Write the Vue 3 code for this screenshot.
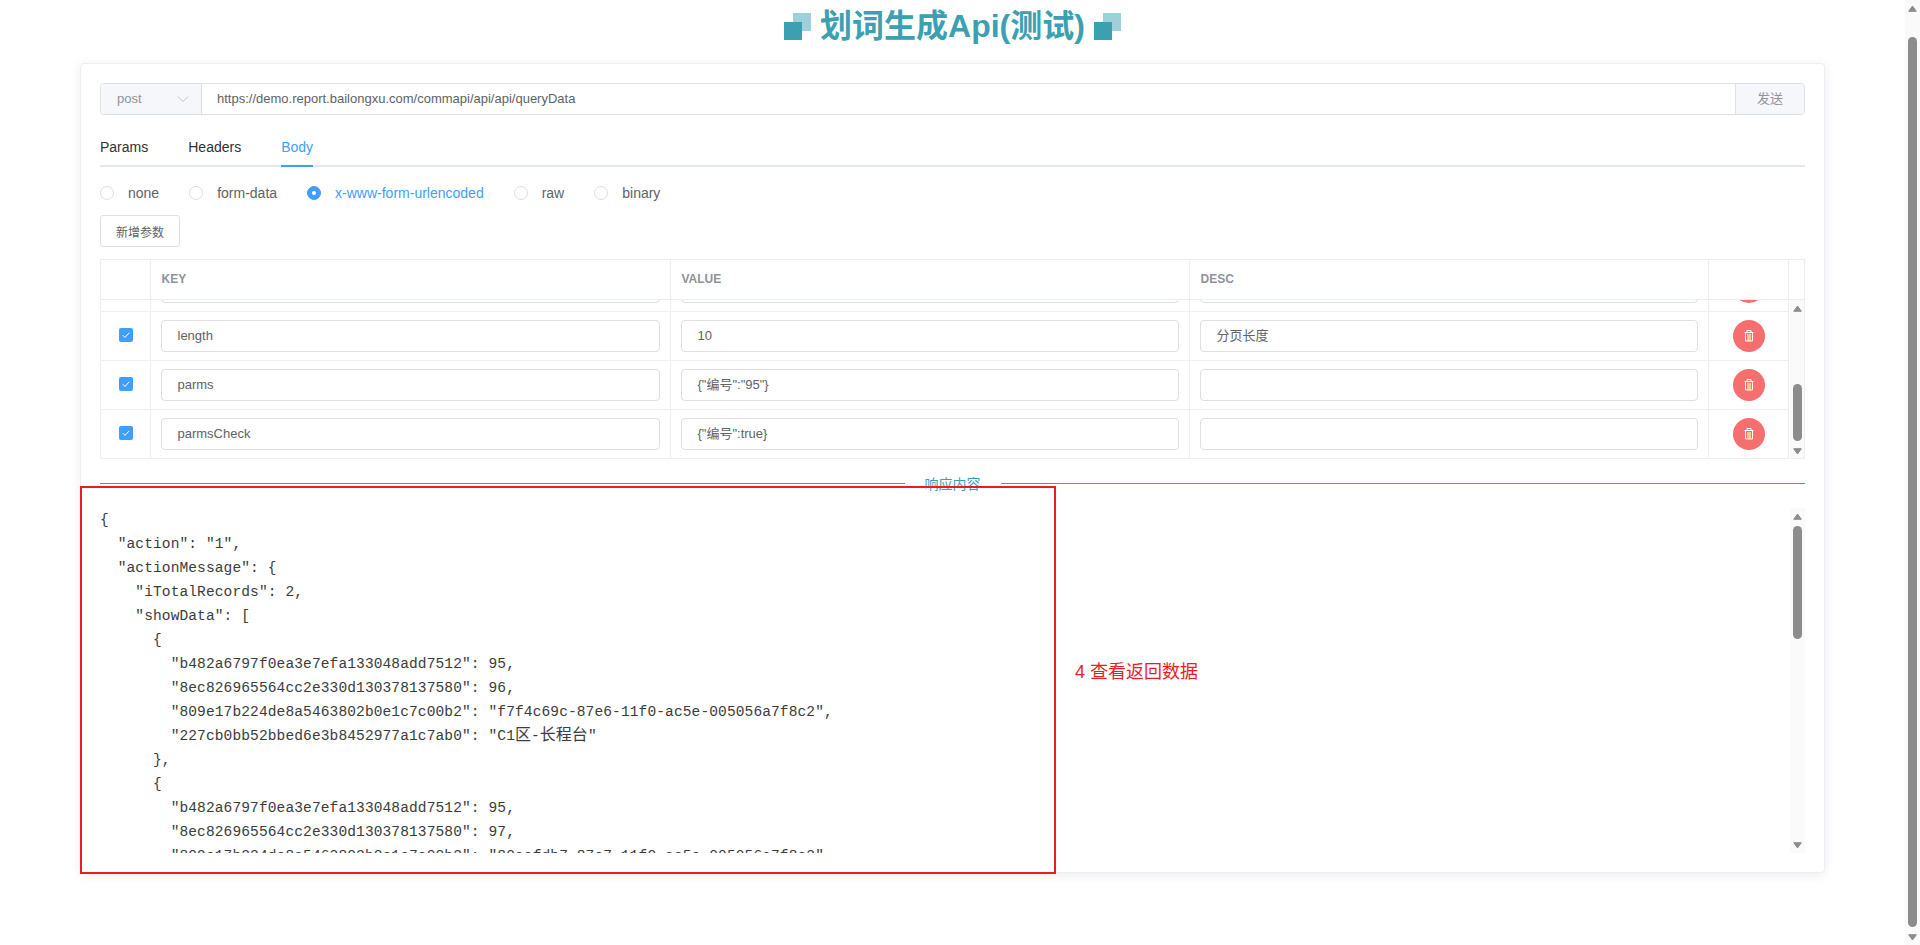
<script setup>
const radios = [
  { label: 'none' },
  { label: 'form-data' },
  { label: 'x-www-form-urlencoded', active: true },
  { label: 'raw' },
  { label: 'binary' },
]
const tabs = [{ label: 'Params' }, { label: 'Headers' }, { label: 'Body', active: true }]
const rows = [
  { key: '', value: '', desc: '' },
  { key: 'length', value: '10', desc: '分页长度' },
  { key: 'parms', value: '{"编号":"95"}', desc: '' },
  { key: 'parmsCheck', value: '{"编号":true}', desc: '' },
]
const json = `{
  "action": "1",
  "actionMessage": {
    "iTotalRecords": 2,
    "showData": [
      {
        "b482a6797f0ea3e7efa133048add7512": 95,
        "8ec826965564cc2e330d130378137580": 96,
        "809e17b224de8a5463802b0e1c7c00b2": "f7f4c69c-87e6-11f0-ac5e-005056a7f8c2",
        "227cb0bb52bbed6e3b8452977a1c7ab0": "C1区-长程台"
      },
      {
        "b482a6797f0ea3e7efa133048add7512": 95,
        "8ec826965564cc2e330d130378137580": 97,
        "809e17b224de8a5463802b0e1c7c00b2": "80acfdb7-87e7-11f0-ac5e-005056a7f8c2"`
  .split('\n')
  .map((l) => l.split(/([\u4e00-\u9fff]+)/))
</script>

<template>
  <div class="page">
    <main class="content">
      <h1 class="title">
        <span class="squares"><i class="sq light"></i><i class="sq dark"></i></span>
        <span class="title-text">划词生成Api(测试)</span>
        <span class="squares"><i class="sq light"></i><i class="sq dark"></i></span>
      </h1>

      <section class="card">
        <div class="url-bar">
          <div class="method">
            <span>post</span>
            <svg class="chevron" width="12" height="8" viewBox="0 0 12 8"><path d="M1 1.5l5 5 5-5" fill="none" stroke="#c0c4cc" stroke-width="1" /></svg>
          </div>
          <div class="url">https://demo.report.bailongxu.com/commapi/api/api/queryData</div>
          <div class="send">发送</div>
        </div>

        <div class="tabs">
          <div v-for="t in tabs" :key="t.label" class="tab" :class="{ active: t.active }">{{ t.label }}</div>
        </div>

        <div class="radios">
          <label v-for="r in radios" :key="r.label" class="radio" :class="{ active: r.active }">
            <i class="radio-dot"></i><span>{{ r.label }}</span>
          </label>
        </div>

        <button class="add">新增参数</button>

        <div class="table">
          <div class="grid head">
            <div class="cell"></div>
            <div class="cell th">KEY</div>
            <div class="cell th">VALUE</div>
            <div class="cell th">DESC</div>
            <div class="cell"></div>
            <div class="cell end"></div>
          </div>
          <div class="tbody">
            <div class="viewport">
              <div class="rows">
                <div v-for="(row, i) in rows" :key="i" class="grid row">
                  <div class="cell center">
                    <span class="check">
                      <svg width="14" height="14" viewBox="0 0 14 14"><path d="M3.8 7.2l2.2 2.2 4.2-4.6" fill="none" stroke="#fff" stroke-width="1" /></svg>
                    </span>
                  </div>
                  <div class="cell pad"><div class="input">{{ row.key }}</div></div>
                  <div class="cell pad"><div class="input">{{ row.value }}</div></div>
                  <div class="cell pad"><div class="input">{{ row.desc }}</div></div>
                  <div class="cell center">
                    <span class="del">
                      <svg width="14" height="14" viewBox="0 0 14 14">
                        <rect x="5" y="5" width="4" height="7" fill="#fbc98a" />
                        <path d="M2.5 3.5h9M5 3.5V1.5h4v2M3.5 3.5v8.5h7V3.5" fill="none" stroke="#fff" stroke-width="1" />
                      </svg>
                    </span>
                  </div>
                </div>
              </div>
            </div>
            <div class="sb sb-table">
              <svg class="arrow" width="9" height="7" viewBox="0 0 9 7"><path d="M4.5 1L8.3 6.3H.7z" fill="#8c8c8c" stroke="#8c8c8c" stroke-linejoin="round" /></svg>
              <div class="thumb"></div>
              <svg class="arrow down" width="9" height="7" viewBox="0 0 9 7"><path d="M4.5 6L8.3.7H.7z" fill="#8c8c8c" stroke="#8c8c8c" stroke-linejoin="round" /></svg>
            </div>
          </div>
        </div>

        <div class="divider">
          <span class="line"></span><span class="divider-text">响应内容</span><span class="line"></span>
        </div>

        <div class="response">
          <div class="code">
            <div v-for="(parts, i) in json" :key="i" class="code-line"><template v-for="(p, j) in parts" :key="j"><span v-if="j % 2" class="cjk">{{ p }}</span><template v-else>{{ p }}</template></template></div>
          </div>
          <div class="sb sb-pane">
            <svg class="arrow" width="9" height="7" viewBox="0 0 9 7"><path d="M4.5 1L8.3 6.3H.7z" fill="#8c8c8c" stroke="#8c8c8c" stroke-linejoin="round" /></svg>
            <div class="thumb"></div>
            <svg class="arrow down" width="9" height="7" viewBox="0 0 9 7"><path d="M4.5 6L8.3.7H.7z" fill="#8c8c8c" stroke="#8c8c8c" stroke-linejoin="round" /></svg>
          </div>
        </div>
      </section>
    </main>

    <div class="sb sb-page">
      <svg class="arrow" width="9" height="7" viewBox="0 0 9 7"><path d="M4.5 1L8.3 6.3H.7z" fill="#8c8c8c" stroke="#8c8c8c" stroke-linejoin="round" /></svg>
      <div class="thumb"></div>
      <svg class="arrow down" width="9" height="7" viewBox="0 0 9 7"><path d="M4.5 6L8.3.7H.7z" fill="#8c8c8c" stroke="#8c8c8c" stroke-linejoin="round" /></svg>
    </div>

    <div class="mark-box"></div>
    <div class="mark-text">4 查看返回数据</div>
  </div>
</template>

<style>
html, body { margin: 0; overflow: hidden; background: #fff; }
</style>

<style scoped>
* { box-sizing: border-box; }
.page {
  position: relative;
  display: flex;
  height: 945px;
  overflow: hidden;
  font-family: "Liberation Sans", "Noto Sans CJK SC", sans-serif;
  color: #606266;
  background: #fff;
}
.content { flex: 1; min-width: 0; padding: 0 80px; }

.title {
  height: 52px;
  margin: 0 0 11px;
  display: flex;
  justify-content: center;
  align-items: center;
  gap: 9px;
  font-size: 32px;
  font-weight: 700;
  line-height: 52px;
  color: #3ba0b0;
}
.squares { position: relative; width: 27px; height: 27px; display: block; }
.sq { position: absolute; width: 18px; height: 18px; display: block; }
.sq.light { left: 9px; top: 0; background: #9dd0d8; }
.sq.dark { left: 0; top: 9px; background: #3ba0b0; }

.card {
  background: #fff;
  border: 1px solid #ebeef5;
  border-radius: 4px;
  box-shadow: 0 2px 12px rgba(0, 0, 0, 0.08);
  padding: 19px;
  height: 810px;
}

.url-bar {
  display: flex;
  height: 32px;
  border: 1px solid #dcdfe6;
  border-radius: 4px;
  font-size: 13px;
  line-height: 30px;
  overflow: hidden;
}
.method {
  width: 101px;
  flex: none;
  padding: 0 12px 0 16px;
  background: #f5f7fa;
  border-right: 1px solid #dcdfe6;
  color: #909399;
  display: flex;
  justify-content: space-between;
  align-items: center;
}
.chevron { display: block; }
.url { flex: 1; padding-left: 15px; }
.send {
  width: 69px;
  flex: none;
  text-align: center;
  background: #f5f7fa;
  border-left: 1px solid #dcdfe6;
  color: #909399;
}

.tabs {
  display: flex;
  gap: 40px;
  height: 40px;
  margin-top: 12px;
  border-bottom: 2px solid #e4e7ed;
}
.tab {
  height: 40px;
  line-height: 40px;
  font-size: 14px;
  color: #303133;
  border-bottom: 2px solid transparent;
}
.tab.active { color: #409eff; border-bottom-color: #409eff; }

.radios {
  display: flex;
  gap: 30px;
  height: 22px;
  margin-top: 15px;
  align-items: center;
  font-size: 14px;
}
.radio { display: flex; align-items: center; gap: 14px; }
.radio-dot {
  width: 14px;
  height: 14px;
  border: 1px solid #dcdfe6;
  border-radius: 50%;
  display: block;
  background: #fff;
}
.radio.active { color: #409eff; }
.radio.active .radio-dot {
  border-color: #409eff;
  background: #409eff;
  display: flex;
  align-items: center;
  justify-content: center;
}
.radio.active .radio-dot::after {
  content: "";
  width: 4px;
  height: 4px;
  border-radius: 50%;
  background: #fff;
}

.add {
  display: block;
  width: 80px;
  height: 32px;
  margin-top: 11px;
  padding: 0;
  border: 1px solid #dcdfe6;
  border-radius: 3px;
  background: #fff;
  color: #606266;
  font: 12px "Liberation Sans", "Noto Sans CJK SC", sans-serif;
}

.table {
  margin-top: 12px;
  border-top: 1px solid #ebeef5;
  border-left: 1px solid #ebeef5;
}
.grid { display: grid; grid-template-columns: 50px 520px 519px 519px 80px; }
.head { grid-template-columns: 50px 520px 519px 519px 80px 16px; height: 40px; border-bottom: 1px solid #ebeef5; }
.cell { border-right: 1px solid #ebeef5; min-width: 0; }
.th {
  padding-left: 10.5px;
  font-size: 12px;
  font-weight: 700;
  line-height: 39px;
  color: #909399;
}
.tbody { display: flex; height: 159px; }
.viewport { width: 1688px; flex: none; height: 159px; overflow: hidden; }
.rows { margin-top: -37px; }
.row { height: 49px; border-bottom: 1px solid #ebeef5; }
.center { display: flex; align-items: center; justify-content: center; }
.pad { padding: 8px 10px; }
.input {
  height: 32px;
  padding: 0 15px 0 15.5px;
  border: 1px solid #dcdfe6;
  border-radius: 4px;
  font-size: 13px;
  line-height: 30px;
  white-space: nowrap;
  background: #fff;
}
.check {
  width: 14px;
  height: 14px;
  margin: 0 0 2px 1px;
  border-radius: 2px;
  background: #409eff;
  display: block;
}
.check svg, .del svg { display: block; }
.del {
  width: 32px;
  height: 32px;
  border-radius: 50%;
  background: #f66e6e;
  display: flex;
  align-items: center;
  justify-content: center;
}

.sb {
  width: 15px;
  flex: none;
  display: flex;
  flex-direction: column;
  align-items: flex-start;
  padding-left: 3px;
  padding-top: 5px;
  background: #fafafa;
}
.arrow { display: block; flex: none; }
.thumb { width: 9px; background: #8c8c8c; border-radius: 5px; flex: none; }
.sb-table { margin-left: 1px; border-right: 1px solid #ebeef5; border-bottom: 1px solid #ebeef5; height: 159px; }
.sb-table .thumb { margin-top: 72px; height: 57px; }
.sb-table .down { margin-top: 7px; }
.sb-pane { height: 345px; }
.sb-pane .thumb { margin-top: 6px; height: 113px; }
.sb-pane .down { margin-top: 203px; }
.sb-page { height: 945px; }
.sb-page .thumb { margin-top: 25px; height: 890px; }
.sb-page .down { margin-top: 7px; }

.divider {
  display: flex;
  align-items: center;
  height: 1px;
  margin: 24px 0;
}
.line { flex: 1; height: 1px; background: #3ba0b0; }
.divider-text {
  flex: none;
  padding: 0 20px;
  font-size: 14px;
  line-height: 20px;
  color: #3ba0b0;
}

.response { display: flex; height: 345px; }
.code {
  flex: 1;
  min-width: 0;
  height: 345px;
  overflow: hidden;
  font-family: "Liberation Mono", "Noto Sans CJK SC", monospace;
  font-size: 14.55px;
  letter-spacing: 0.1px;
  line-height: 24px;
  color: #3c3c3c;
  white-space: pre;
}
.code-line { height: 24px; }
.cjk { font-size: 16px; line-height: 0; letter-spacing: 0; font-family: "Noto Sans CJK SC", sans-serif; }

.mark-box {
  position: absolute;
  left: 80px;
  top: 486px;
  width: 976px;
  height: 388px;
  border: 2px solid #ed1c24;
  pointer-events: none;
}
.mark-text {
  position: absolute;
  left: 1075px;
  top: 660px;
  font-size: 18px;
  line-height: 24px;
  color: #ed1c24;
}
</style>
